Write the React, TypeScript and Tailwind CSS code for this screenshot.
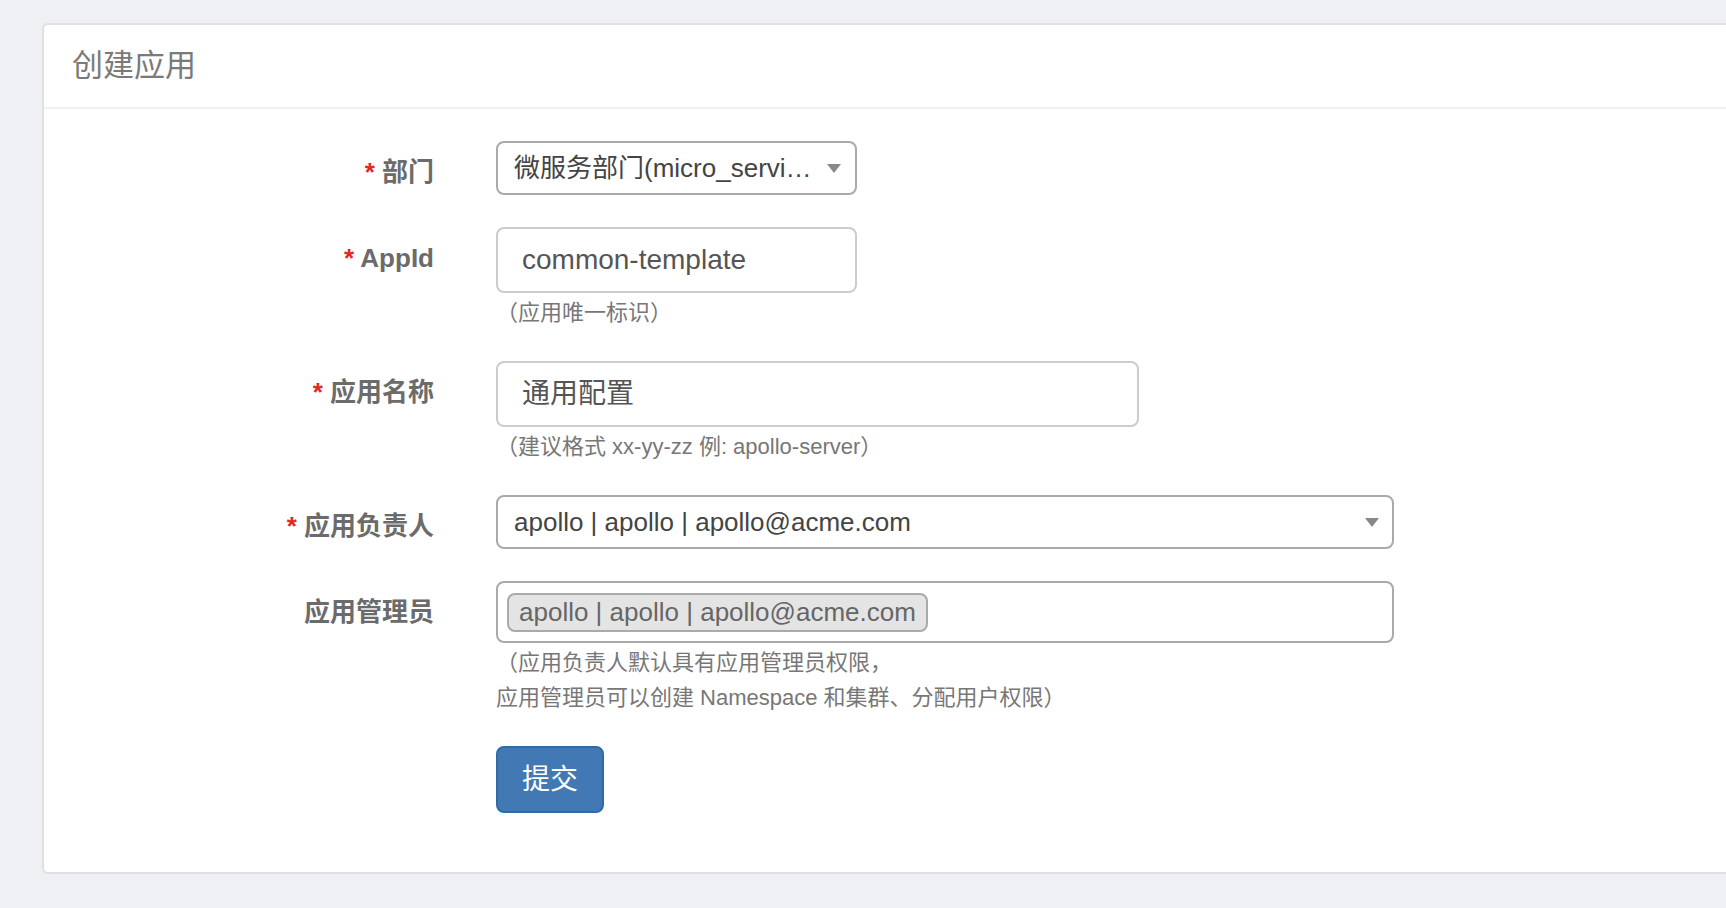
import React from "react"

const FONT = "font-['Liberation_Sans','Noto_Sans_CJK_SC',sans-serif]"

const Caret: React.FC = () => (
  <span className="ml-auto h-0 w-0 border-x-[7px] border-t-[9px] border-x-transparent border-t-[#888888]" />
)

const FormRow: React.FC<{ label: string; required?: boolean; last?: boolean; children: React.ReactNode }> = ({
  label,
  required,
  last,
  children,
}) => (
  <div className={`flex items-start ${last ? "mb-[31px]" : "mb-[32px]"}`}>
    <label className="w-[390px] shrink-0 pt-[13px] text-right text-[26px] font-bold leading-[36px] text-[#6b6b6b]">
      {required && <span className="text-[#e3271e]">* </span>}
      {label}
    </label>
    <div className="ml-[62px]">{children}</div>
  </div>
)

const Hint: React.FC<{ children: React.ReactNode }> = ({ children }) => (
  <p className="mt-[2px] text-[22px] leading-[35px] text-[#777777]">{children}</p>
)

export default function App() {
  return (
    <div className={`h-[908px] w-full overflow-hidden bg-[#eff0f4] pl-[42px] pt-[23px] ${FONT}`}>
      <div className="w-[1720px] rounded-[6px] border-2 border-[#e0e0e0] bg-white">
        <div className="flex h-[84px] items-center border-b-2 border-[#eef2f7] pl-[28px] text-[31px] text-[#7a7a7a]">
          创建应用
        </div>

        <form className="pb-[59px] pt-[32px]">
          <FormRow label="部门" required>
            <div className="flex h-[54px] w-[361px] items-center rounded-[8px] border-2 border-[#aaaaaa] pl-[16px] pr-[14px] text-[26px] text-[#444444]">
              <span className="whitespace-nowrap">微服务部门(micro_servi…</span>
              <Caret />
            </div>
          </FormRow>

          <FormRow label="AppId" required last>
            <div className="flex h-[66px] w-[361px] items-center rounded-[8px] border-2 border-[#cccccc] pl-[24px] text-[28px] text-[#555555]">
              common-template
            </div>
            <Hint>（应用唯一标识）</Hint>
          </FormRow>

          <FormRow label="应用名称" required last>
            <div className="flex h-[66px] w-[643px] items-center rounded-[8px] border-2 border-[#cccccc] pl-[24px] text-[28px] text-[#555555]">
              通用配置
            </div>
            <Hint>（建议格式 xx-yy-zz 例: apollo-server）</Hint>
          </FormRow>

          <FormRow label="应用负责人" required>
            <div className="flex h-[54px] w-[898px] items-center rounded-[8px] border-2 border-[#aaaaaa] pl-[16px] pr-[13px] text-[26px] text-[#444444]">
              <span>apollo | apollo | apollo@acme.com</span>
              <Caret />
            </div>
          </FormRow>

          <FormRow label="应用管理员" last>
            <div className="flex h-[62px] w-[898px] items-start rounded-[8px] border-2 border-[#aaaaaa] pl-[9px] pt-[10px]">
              <span className="flex h-[39px] items-center rounded-[8px] border-2 border-[#aaaaaa] bg-[#e4e4e4] px-[10px] text-[26px] text-[#666666]">
                apollo | apollo | apollo@acme.com
              </span>
            </div>
            <Hint>
              （应用负责人默认具有应用管理员权限，
              <br />
              应用管理员可以创建 Namespace 和集群、分配用户权限）
            </Hint>
          </FormRow>

          <div className="ml-[452px]">
            <button
              type="button"
              className="h-[67px] w-[108px] rounded-[8px] border-2 border-[#2e6da4] bg-[#4279b5] text-[28px] text-white"
            >
              提交
            </button>
          </div>
        </form>
      </div>
    </div>
  )
}
